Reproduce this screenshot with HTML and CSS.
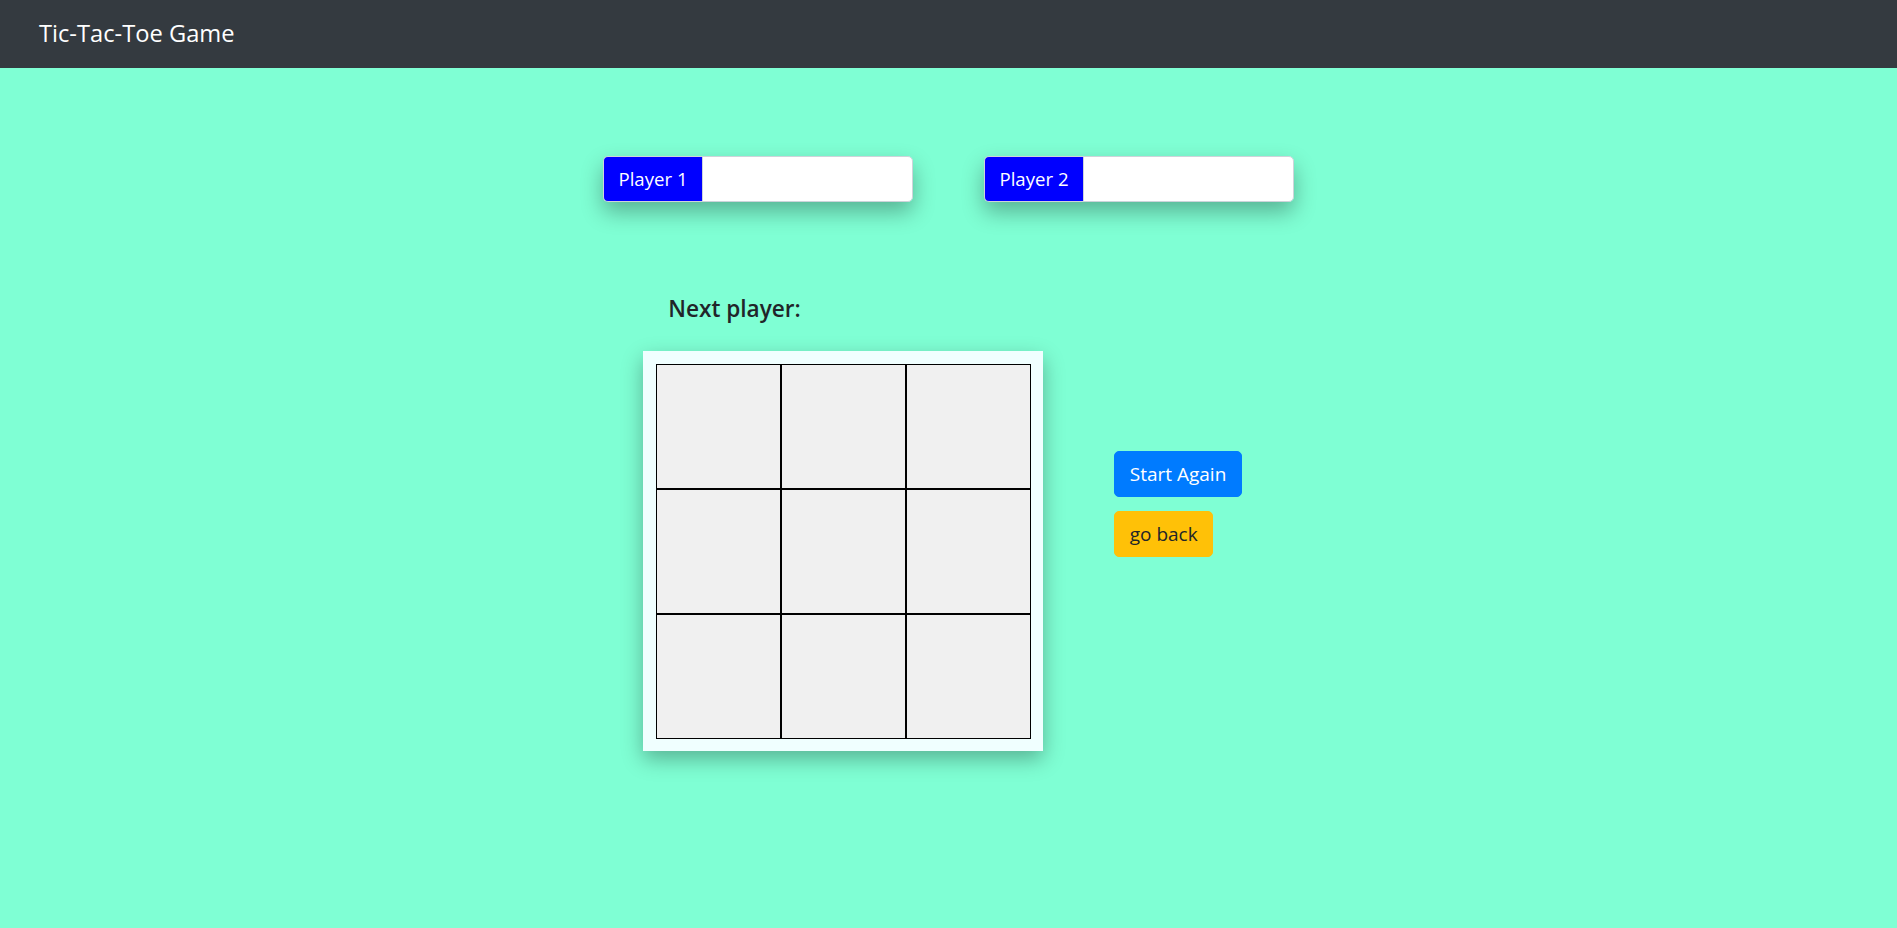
FILE: index.html
```html
<!DOCTYPE html>
<html lang="en">
<head>
<meta charset="utf-8">
<title>Tic-Tac-Toe Game</title>
<link rel="stylesheet" href="styles.css">
</head>
<body>
  <nav class="navbar">
    <span class="brand">Tic-Tac-Toe Game</span>
  </nav>
  <div class="players">
    <div class="input-group">
      <span class="input-label">Player 1</span>
      <input class="input-field" type="text">
    </div>
    <div class="input-group">
      <span class="input-label">Player 2</span>
      <input class="input-field" type="text">
    </div>
  </div>
  <div class="game">
    <div class="game-main">
      <h5 class="status">Next player:</h5>
      <div class="board">
        <div class="cell"></div><div class="cell"></div><div class="cell"></div>
        <div class="cell"></div><div class="cell"></div><div class="cell"></div>
        <div class="cell"></div><div class="cell"></div><div class="cell"></div>
      </div>
    </div>
    <div class="controls">
      <button class="btn btn-primary">Start Again</button>
      <button class="btn btn-warning">go back</button>
    </div>
  </div>
</body>
</html>
```
FILE: styles.css
```css
* { box-sizing: border-box; }
html, body { margin: 0; padding: 0; }
body {
  background: #7fffd4;
  font-family: "Open Sans", "Noto Sans", "Liberation Sans", sans-serif;
  color: #212529;
  font-size: 19.36px;
  line-height: 1.5;
  min-height: 928px;
}
.navbar {
  height: 68px;
  background: #343a40;
  display: flex;
  align-items: center;
  padding: 0 39px;
}
.brand {
  color: #fff;
  font-size: 23.7px;
  line-height: 1.5;
}
.players {
  display: flex;
  justify-content: center;
  gap: 71px;
  margin-top: 88px;
}
.input-group {
  width: 310px;
  height: 46px;
  display: flex;
  border-radius: 5px;
  box-shadow: 0 10px 22px rgba(0,0,0,0.3);
}
.input-label {
  width: 99px;
  background: #0000ff;
  color: #fff;
  display: flex;
  align-items: center;
  justify-content: center;
  font-size: 18.6px;
  border: 1px solid #ced4da;
  border-right: none;
  border-radius: 5px 0 0 5px;
}
.input-field {
  flex: 1;
  min-width: 0;
  border: 1px solid #ced4da;
  border-radius: 0 5px 5px 0;
  background: #fff;
  font: inherit;
  margin: 0;
}
.game {
  display: flex;
  justify-content: center;
  align-items: flex-start;
  gap: 71px;
  margin-top: 92px;
  padding-right: 12px;
}
.game-main {
  display: flex;
  flex-direction: column;
}
.status {
  margin: 0 0 28px 25px;
  font-size: 22.6px;
  font-weight: 600;
  line-height: 29px;
}
.board {
  width: 400px;
  height: 400px;
  padding: 13px 12px 12px 13px;
  background: #f0ffff;
  display: grid;
  grid-template-columns: repeat(3, 125px);
  grid-template-rows: repeat(3, 125px);
  box-shadow: 0 8px 20px rgba(0,0,0,0.3);
}
.cell {
  border: 1px solid #000;
  background: #f0f0f0;
}
.controls {
  display: flex;
  flex-direction: column;
  align-items: flex-start;
  gap: 14px;
  margin-top: 157px;
}
.btn {
  font: inherit;
  font-size: 19px;
  height: 46px;
  padding: 0 14.5px;
  border: 1px solid transparent;
  border-radius: 5px;
  line-height: 1.5;
  cursor: pointer;
}
.btn-primary { background: #007bff; border-color: #007bff; color: #fff; }
.btn-warning { background: #ffc107; border-color: #ffc107; color: #212529; }
```
